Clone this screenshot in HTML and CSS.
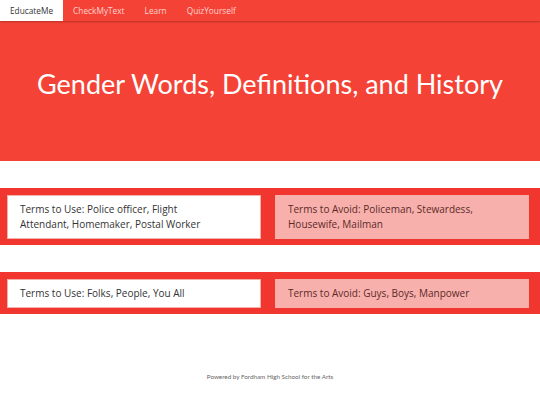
FILE: index.html
```html
<!DOCTYPE html>
<html>
<head>
<meta charset="utf-8">
<link rel="stylesheet" href="styles.css">
</head>
<body>
<nav class="topnav">
  <a class="nav-item active">EducateMe</a>
  <a class="nav-item">CheckMyText</a>
  <a class="nav-item">Learn</a>
  <a class="nav-item">QuizYourself</a>
</nav>
<header class="hero">
  <h1 class="hero-title">Gender Words, Definitions, and History</h1>
</header>
<main class="terms">
  <section class="band">
    <div class="card use">Terms to Use: Police officer, Flight Attendant, Homemaker, Postal Worker</div>
    <div class="card avoid">Terms to Avoid: Policeman, Stewardess, Housewife, Mailman</div>
  </section>
  <section class="band">
    <div class="card use">Terms to Use: Folks, People, You All</div>
    <div class="card avoid">Terms to Avoid: Guys, Boys, Manpower</div>
  </section>
</main>
<footer class="footer">Powered by <a class="footer-link">Fordham High School for the Arts</a></footer>
</body>
</html>
```

FILE: styles.css
```css
html, body {
  margin: 0;
  padding: 0;
  background: #ffffff;
}
body {
  font-family: "Open Sans", "DejaVu Sans", sans-serif;
  color: #333;
}
.topnav {
  display: flex;
  height: 21px;
  background: #f44336;
  box-shadow: 0 1px 2px rgba(0,0,0,0.25);
  position: relative;
  z-index: 1;
}
.nav-item {
  display: flex;
  align-items: center;
  padding: 0 10px;
  font-size: 8.3px;
  color: #fcd3cf;
}
.nav-item.active {
  background: #ffffff;
  color: #333;
}
.hero {
  background: #f44336;
  height: 140px;
  display: flex;
  align-items: center;
  justify-content: center;
  padding-bottom: 16px;
  box-sizing: border-box;
}
.hero-title {
  margin: 0;
  font-family: Lato, sans-serif;
  font-weight: 400;
  font-size: 27px;
  color: #ffffff;
}
.terms {
  padding-top: 27px;
}
.band {
  background: #f0362e;
  display: grid;
  grid-template-columns: 1fr 1fr;
  gap: 14px;
  padding: 7px 11px 6px 7px;
  margin-bottom: 27px;
  align-items: stretch;
}
.card {
  font-size: 10px;
  line-height: 15px;
  padding: 6px 40px 6px 12px;
  border: 1px solid #f6b0ab;
}
.card.use {
  background: #ffffff;
  color: #333;
}
.card.avoid {
  background: #f8b0ac;
  color: #5b2a28;
}
.footer {
  text-align: center;
  font-family: Lato, sans-serif;
  font-size: 6.3px;
  color: #666;
  padding-top: 32px;
}
.footer-link {
  text-decoration: underline;
}
```
